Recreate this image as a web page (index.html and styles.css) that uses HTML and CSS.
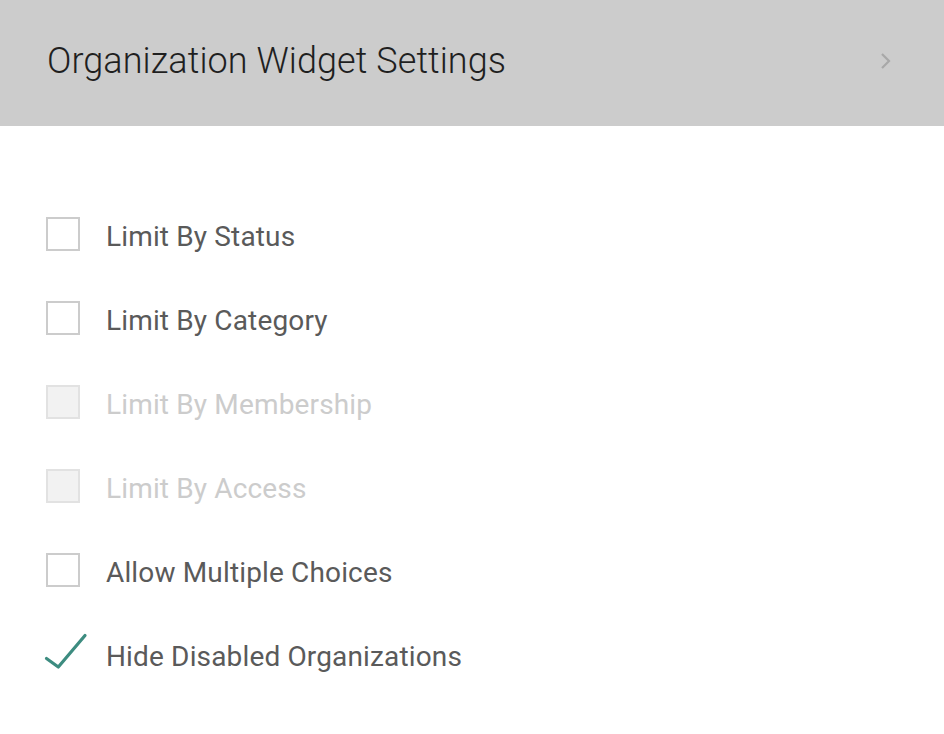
FILE: index.html
```html
<!DOCTYPE html>
<html lang="en">
<head>
<meta charset="utf-8">
<title>Organization Widget Settings</title>
<link rel="stylesheet" href="styles.css">
</head>
<body>
<header class="header">
  <h1 class="title">Organization Widget Settings</h1>
  <svg class="chevron" width="14" height="20" viewBox="0 0 14 20"><path d="M3 3 L10 10 L3 17" fill="none" stroke="#a8a8a8" stroke-width="2.2"/></svg>
</header>
<ul class="options">
  <li class="option"><span class="box"></span><span class="label">Limit By Status</span></li>
  <li class="option"><span class="box"></span><span class="label">Limit By Category</span></li>
  <li class="option disabled"><span class="box"></span><span class="label">Limit By Membership</span></li>
  <li class="option disabled"><span class="box"></span><span class="label">Limit By Access</span></li>
  <li class="option"><span class="box"></span><span class="label">Allow Multiple Choices</span></li>
  <li class="option checked"><svg class="check" width="44" height="40" viewBox="0 0 44 40"><path d="M2.5 26.5 L14.3 35 L41 3.5" fill="none" stroke="#3d8c80" stroke-width="3.2" stroke-linecap="round" stroke-linejoin="round"/></svg><span class="label">Hide Disabled Organizations</span></li>
</ul>
</body>
</html>
```
FILE: styles.css
```css
html, body {
  margin: 0;
  padding: 0;
  background: #ffffff;
}
body {
  font-family: Roboto, "Liberation Sans", sans-serif;
}
.header {
  height: 126px;
  background: #cccccc;
  display: flex;
  align-items: center;
  justify-content: space-between;
  padding: 0 51px 0 47px;
  box-sizing: border-box;
}
.title {
  margin: 0;
  font-size: 36px;
  font-weight: 300;
  color: #1f1f1f;
  line-height: 1;
  letter-spacing: 0.07px;
  position: relative;
  top: -2px;
}
.chevron {
  display: block;
  margin-top: -4px;
}
.options {
  list-style: none;
  margin: 0;
  padding: 66px 0 0 46px;
}
.option {
  display: flex;
  align-items: center;
  height: 84px;
}
.box {
  width: 34px;
  height: 34px;
  box-sizing: border-box;
  border: 2px solid #cccccc;
  background: #ffffff;
  margin-right: 26px;
  flex: none;
}
.label {
  font-size: 28px;
  color: #5a5a5a;
  line-height: 1;
  letter-spacing: 0.15px;
  position: relative;
  top: 3px;
}
.disabled .box {
  border-color: #e2e2e2;
  background: #f2f2f2;
}
.disabled .label {
  color: #cccccc;
}
.check {
  display: block;
  flex: none;
  margin-left: -2px;
  margin-right: 18px;
  margin-bottom: 4px;
}
```
